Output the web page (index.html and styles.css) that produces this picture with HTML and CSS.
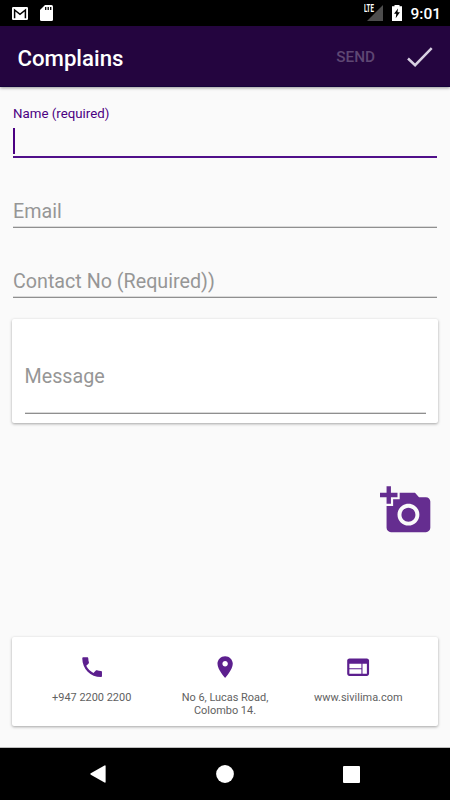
FILE: index.html
```html
<!DOCTYPE html>
<html lang="en">
<head>
<meta charset="utf-8">
<title>Complains</title>
<link rel="stylesheet" href="styles.css">
</head>
<body>
<div class="screen">
  <div class="status">
    <svg class="mail" width="16" height="13" viewBox="0 0 16 13"><rect width="16" height="13" rx="1.2" fill="#fff"/><path d="M2.6 11.2V3l5.4 4.3L13.4 3v8.2" fill="none" stroke="#000" stroke-width="1.5"/></svg>
    <svg class="sd" width="13" height="16" viewBox="0 0 13 16"><path d="M5 0h6.5A1.5 1.5 0 0 1 13 1.500v13a1.500 1.500 0 0 1-1.500 1.500h-10A1.500 1.500 0 0 1 0 14.500V5z" fill="#fff"/><path d="M5.700 2v3M8.200 2v3M10.700 2v3" stroke="#000" stroke-width="1.300"/></svg>
    <span class="grow"></span>
    <span class="signal"><svg width="16" height="16" viewBox="0 0 16 16"><path d="M16 0v16H0z" fill="#4d4d4d"/></svg><span class="lte">LTE</span></span>
    <svg class="battery" width="10" height="16" viewBox="0 0 10 16"><path d="M2.500 0h5v1.200H10V16H0V1.200h2.500z" fill="#fff"/><path d="M6 3.500 2 8.800h2.300L3.700 13.200 7.900 7.300H5.500z" fill="#000"/></svg>
    <span class="time">9:01</span>
  </div>
  <header class="bar">
    <h1>Complains</h1>
    <span class="send">SEND</span>
    <svg class="check" width="26" height="20" viewBox="0 0 26 20"><path d="M1 11.500 8.100 18.200 24.700 1.200" fill="none" stroke="#d8d0e2" stroke-width="2.500"/></svg>
  </header>
  <main>
    <div class="field active"><label>Name (required)</label><div class="entry"><i class="caret"></i></div></div>
    <div class="field email"><span>Email</span></div>
    <div class="field contact"><span>Contact No (Required))</span></div>
    <section class="card message"><div class="field"><span>Message</span></div></section>
    <svg class="camera" width="52.5" height="52.5" viewBox="0 0 24 24"><path d="M3 4V1h2v3h3v2H5v3H3V6H0V4h3zm3 6V7h3V4h7l1.830 2H21c1.100 0 2 .9 2 2v12c0 1.100-.9 2-2 2H5c-1.100 0-2-.9-2-2V10h3zm7 9c2.760 0 5-2.240 5-5s-2.240-5-5-5-5 2.240-5 5 2.240 5 5 5zm-3.200-5c0 1.770 1.430 3.200 3.200 3.200s3.200-1.430 3.200-3.200-1.430-3.200-3.200-3.200-3.200 1.430-3.200 3.200z"/></svg>
    <section class="card contacts">
      <div class="item">
        <svg viewBox="0 0 24 24"><path d="M6.620 10.790c1.440 2.830 3.760 5.140 6.590 6.590l2.200-2.200c.27-.27.67-.36 1.020-.24 1.120.37 2.330.57 3.570.57.55 0 1 .45 1 1V20c0 .55-.45 1-1 1-9.390 0-17-7.610-17-17 0-.55.45-1 1-1h3.500c.55 0 1 .45 1 1 0 1.250.2 2.450.57 3.570.11.35.03.74-.25 1.020l-2.200 2.200z"/></svg>
        <p>+947 2200 2200</p>
      </div>
      <div class="item">
        <svg viewBox="0 0 24 24"><path d="M12 2C8.130 2 5 5.130 5 9c0 5.250 7 13 7 13s7-7.750 7-13c0-3.870-3.130-7-7-7zm0 9.500c-1.380 0-2.500-1.120-2.500-2.500s1.120-2.500 2.500-2.500 2.500 1.120 2.500 2.500-1.120 2.500-2.500 2.500z"/></svg>
        <p>No 6, Lucas Road,<br>Colombo 14.</p>
      </div>
      <div class="item">
        <svg viewBox="0 0 24 24"><path d="M20 4H4c-1.100 0-1.990.9-1.990 2L2 18c0 1.100.9 2 2 2h16c1.100 0 2-.9 2-2V6c0-1.100-.9-2-2-2zm-5 14H4v-4h11v4zm0-5H4V9h11v4zm5 5h-4V9h4v9z"/></svg>
        <p>www.sivilima.com</p>
      </div>
    </section>
  </main>
  <nav>
    <svg width="16" height="18" viewBox="0 0 16 18"><path d="M.8 8.300 14.500.4q1.100-.5 1.100.6v16q0 1.100-1.100.6L.8 9.700q-1-.7 0-1.400z" fill="#fff"/></svg>
    <svg width="18" height="18" viewBox="0 0 18 18"><circle cx="9" cy="9" r="8.900" fill="#fff"/></svg>
    <svg width="17" height="17" viewBox="0 0 17 17"><rect width="17" height="17" rx="1" fill="#fff"/></svg>
  </nav>
</div>
</body>
</html>
```

FILE: styles.css
```css
* { box-sizing: border-box; }
body { margin: 0; font-family: Roboto, "Liberation Sans", sans-serif; background: #fafafa; }
svg { display: block; flex: none; }
.screen { width: 450px; height: 800px; display: flex; flex-direction: column; overflow: hidden; }
.status { height: 26px; background: #000; color: #fff; display: flex; padding: 5px 9px 0 12px; }
.mail { margin-top: 2px; }
.sd { margin-left: 12px; }
.grow { flex: 1; }
.signal { position: relative; margin-right: 1px; }
.lte { position: absolute; left: -3px; top: -1px; font-size: 10.500px; line-height: 10px; font-weight: 700; transform: scaleX(.58); transform-origin: left; }
.battery { margin-left: 8px; }
.time { margin-left: 8px; font-size: 15.500px; line-height: 18px; font-weight: 500; }
.bar { height: 61px; flex: none; background: #24053f; display: flex; align-items: center; padding: 2px 17.500px 0 17.500px; box-shadow: 0 1px 3px rgba(0,0,0,.4); border-bottom: 1px solid #15033a; }
h1 { margin: 0; padding-top: 1px; flex: 1; color: #fff; font-size: 22.200px; line-height: 26px; font-weight: 500; }
.send { color: #5e4773; font-size: 15.300px; font-weight: 500; }
.check { margin-left: 31.500px; }
main { flex: 1; display: flex; flex-direction: column; padding: 18px 12px 0; }
.field { margin: 0 1px; border-bottom: 1px solid #8f8f8f; box-shadow: inset 0 -1px #dadada; color: #969696; font-size: 19.700px; line-height: 24px; }
.active { height: 53px; border-bottom: 2px solid #50108a; box-shadow: none; }
.active label { display: block; padding-top: 1px; color: #4b0082; font-size: 13.300px; line-height: 15px; }
.entry { padding-top: 7px; }
.caret { display: block; width: 2px; height: 26px; background: #4b0082; }
.email { height: 70px; padding-top: 42px; }
.contact { height: 70px; padding-top: 42px; }
.card { background: #fff; border-radius: 2px; box-shadow: 0 1px 3px rgba(0,0,0,.35); }
.message { margin-top: 21px; height: 104px; padding: 0 12px; }
.message .field { height: 95px; padding-top: 46px; margin: 0 0.500px; }
.camera { align-self: flex-end; margin: 61px 5.500px 0 0; fill: #652d90; }
.contacts { margin-top: 100.500px; height: 89px; padding: 17px 13px 0; display: grid; grid-template-columns: repeat(3, 1fr); }
.item { display: flex; flex-direction: column; align-items: center; text-align: center; }
.item svg { width: 26.250px; height: 26.250px; fill: #5c1f8e; }
.item p { margin: 12px 0 0; color: #616161; font-size: 10.950px; line-height: 12.500px; }
nav { height: 52px; background: #000; display: grid; grid-template-columns: repeat(3, 1fr); align-items: center; justify-items: center; padding: 0 35px; box-shadow: 0 -1px #bdbdbd; }
```
